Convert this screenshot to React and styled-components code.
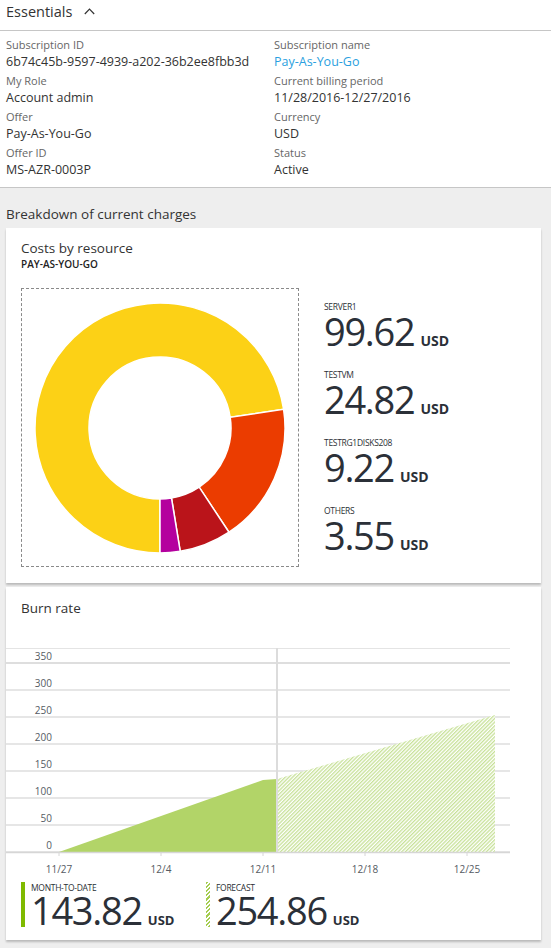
import React from "react";
import styled, { createGlobalStyle } from "styled-components";

const GlobalStyle = createGlobalStyle`
  html, body {
    margin: 0;
    padding: 0;
    background: #eeeeee;
  }
  body {
    font-family: "Open Sans", "Noto Sans", sans-serif;
    color: #32373e;
  }
  * { box-sizing: border-box; }
`;

const Page = styled.div`
  width: 551px;
  min-height: 948px;
  background: #eeeeee;
`;

const Essentials = styled.section`
  background: #ffffff;
  border-bottom: 1px solid #c6c6c6;
`;

const EssHeader = styled.div`
  height: 31px;
  display: flex;
  align-items: center;
  gap: 12px;
  padding-left: 6px;
  padding-bottom: 7px;
  font-size: 14.5px;
  color: #333;
  border-bottom: 1px solid #c6c6c6;
`;

const EssGrid = styled.div`
  display: grid;
  grid-template-columns: 268px 1fr;
  row-gap: 2px;
  padding: 7px 6px 7px 6px;
`;

const Field = styled.div`
  display: flex;
  flex-direction: column;
`;

const FieldLabel = styled.div`
  font-size: 11px;
  line-height: 14px;
  color: #666;
`;

const FieldValue = styled.div`
  font-size: 12.5px;
  line-height: 20px;
  color: ${(p) => (p.$link ? "#2a9fe0" : "#333")};
`;

const Breakdown = styled.section`
  padding: 16px 10px 0 6px;
  display: flex;
  flex-direction: column;
`;

const SectionTitle = styled.div`
  font-size: 13.5px;
  line-height: 20px;
  color: #333;
  margin-bottom: 4px;
`;

const Card = styled.div`
  background: #ffffff;
  box-shadow: 0 2px 2px rgba(0, 0, 0, 0.22);
  margin-bottom: ${(p) => p.$mb || 0}px;
`;

const CardTitle = styled.div`
  font-size: 13.5px;
  line-height: 18px;
  color: #333;
  padding: ${(p) => p.$pad};
`;

const SubTitle = styled.div`
  font-size: 10px;
  font-weight: 600;
  line-height: 14px;
  color: #222;
  padding-left: 15px;
`;

const CostsBody = styled.div`
  display: flex;
  gap: 25px;
  padding: 17px 15px 16px 15px;
`;

const DonutBox = styled.div`
  flex: none;
  width: 278px;
  height: 279px;
  border: 1px dashed #8a8a8a;
  display: flex;
  align-items: center;
  justify-content: center;
`;

const Legend = styled.div`
  display: flex;
  flex-direction: column;
  justify-content: center;
  gap: 20px;
`;

const LegendItem = styled.div`
  display: flex;
  flex-direction: column;
`;

const SmallCaps = styled.div`
  font-size: 8.5px;
  line-height: ${(p) => p.$lh || 10}px;
  letter-spacing: -0.3px;
  text-transform: uppercase;
  color: #2b2f35;
`;

const Amount = styled.div`
  display: flex;
  align-items: baseline;
  gap: 6px;
  height: ${(p) => p.$lh || 38}px;
  line-height: ${(p) => p.$lh || 38}px;
`;

const Big = styled.span`
  font-size: ${(p) => p.$size || 38}px;
  letter-spacing: -1.3px;
  color: #2b3038;
`;

const Unit = styled.span`
  font-size: ${(p) => p.$size || 14}px;
  line-height: 1;
  font-weight: 700;
  color: #2b3038;
`;

const ChartWrap = styled.div`
  margin-top: 23px;
  height: 240px;
`;

const Footer = styled.div`
  display: grid;
  grid-template-columns: 185px auto;
  padding: 2px 15px 13px 15px;
`;

const Metric = styled.div`
  display: flex;
  gap: 6px;
`;

const MetricBar = styled.div`
  width: 4px;
  height: 45px;
  background: ${(p) =>
    p.$hatched
      ? "repeating-linear-gradient(135deg, #a5cd50 0 1.5px, #ffffff 1.5px 3px)"
      : "#7fba00"};
`;

const MetricText = styled.div`
  display: flex;
  flex-direction: column;
`;

const Chevron = () => (
  <svg width="11" height="7" viewBox="0 0 11 7">
    <polyline points="0.8,6 5.5,1.2 10.2,6" fill="none" stroke="#333" strokeWidth="1.2" />
  </svg>
);

const segs = [
  { v: 99.62, c: "#fcd116" },
  { v: 24.82, c: "#eb3c00" },
  { v: 9.22, c: "#ba141a" },
  { v: 3.55, c: "#b4009e" },
];

function pt(cx, cy, r, a) {
  const rad = (a * Math.PI) / 180;
  return [cx + r * Math.sin(rad), cy - r * Math.cos(rad)];
}

const Donut = () => {
  const total = segs.reduce((s, x) => s + x.v, 0);
  const cx = 126, cy = 126, R = 125, r = 71;
  let a = 180;
  return (
    <svg width="252" height="252" viewBox="0 0 252 252">
      {segs.map((s, i) => {
        const sweep = (s.v / total) * 360;
        const a0 = a, a1 = a + sweep;
        a = a1;
        const large = sweep > 180 ? 1 : 0;
        const [x0, y0] = pt(cx, cy, R, a0);
        const [x1, y1] = pt(cx, cy, R, a1);
        const [x2, y2] = pt(cx, cy, r, a1);
        const [x3, y3] = pt(cx, cy, r, a0);
        const d = `M${x0} ${y0} A${R} ${R} 0 ${large} 1 ${x1} ${y1} L${x2} ${y2} A${r} ${r} 0 ${large} 0 ${x3} ${y3} Z`;
        return <path key={i} d={d} fill={s.c} stroke="#fff" strokeWidth="1.5" />;
      })}
    </svg>
  );
};

const yTicks = [350, 300, 250, 200, 150, 100, 50, 0];
const xTicks = [
  { x: 53, l: "11/27" },
  { x: 155, l: "12/4" },
  { x: 257, l: "12/11" },
  { x: 359, l: "12/18" },
  { x: 461, l: "12/25" },
];

const BurnChart = () => (
  <svg width="504" height="240" viewBox="0 0 504 240" style={{ display: "block" }}>
    <defs>
      <pattern id="hatch" width="2.6" height="2.6" patternUnits="userSpaceOnUse" patternTransform="rotate(45)">
        <rect width="2.6" height="2.6" fill="#ffffff" />
        <line x1="0.65" y1="0" x2="0.65" y2="2.6" stroke="#c7e198" strokeWidth="1.3" />
      </pattern>
    </defs>
    <line x1="0" y1="8.5" x2="504" y2="8.5" stroke="#e4e4e4" strokeWidth="1" />
    {yTicks.map((t, i) => {
      const y = 23 + i * 27;
      return (
        <g key={t}>
          <line x1="0" y1={y} x2="504" y2={y} stroke="#dedede" strokeWidth={i === 0 ? 2 : 1.3} />
          <text x="46" y={y - 3.5} textAnchor="end" fontSize="10" fill="#555b63" fontFamily="Open Sans, sans-serif">
            {t}
          </text>
        </g>
      );
    })}
    <polygon points="53,212 257,140 271,139 271,212" fill="#b2d468" />
    <polygon points="271,212 271,139 489,75 489,212" fill="url(#hatch)" />
    <line x1="271" y1="8" x2="271" y2="212" stroke="#dcdcdc" strokeWidth="2" />
    <line x1="0" y1="212.5" x2="504" y2="212.5" stroke="#d6d6d6" strokeWidth="1.5" />
    {xTicks.map((t) => (
      <g key={t.l}>
        <line x1={t.x} y1="212" x2={t.x} y2="216" stroke="#d6d6d6" strokeWidth="1" />
        <text x={t.x} y="233" textAnchor="middle" fontSize="10" fill="#555b63" fontFamily="Open Sans, sans-serif">
          {t.l}
        </text>
      </g>
    ))}
  </svg>
);

const essentials = [
  ["Subscription ID", "6b74c45b-9597-4939-a202-36b2ee8fbb3d"],
  ["Subscription name", "Pay-As-You-Go", true],
  ["My Role", "Account admin"],
  ["Current billing period", "11/28/2016-12/27/2016"],
  ["Offer", "Pay-As-You-Go"],
  ["Currency", "USD"],
  ["Offer ID", "MS-AZR-0003P"],
  ["Status", "Active"],
];

const costs = [
  ["SERVER1", "99.62"],
  ["TESTVM", "24.82"],
  ["TESTRG1DISKS208", "9.22"],
  ["OTHERS", "3.55"],
];

export default function App() {
  return (
    <Page>
      <GlobalStyle />
      <Essentials>
        <EssHeader>
          <span>Essentials</span>
          <Chevron />
        </EssHeader>
        <EssGrid>
          {essentials.map(([l, v, link]) => (
            <Field key={l}>
              <FieldLabel>{l}</FieldLabel>
              <FieldValue $link={link}>{v}</FieldValue>
            </Field>
          ))}
        </EssGrid>
      </Essentials>
      <Breakdown>
        <SectionTitle>Breakdown of current charges</SectionTitle>
        <Card $mb={4}>
          <CardTitle $pad="11px 15px 0 15px">Costs by resource</CardTitle>
          <SubTitle>PAY-AS-YOU-GO</SubTitle>
          <CostsBody>
            <DonutBox>
              <Donut />
            </DonutBox>
            <Legend>
              {costs.map(([n, v]) => (
                <LegendItem key={n}>
                  <SmallCaps>{n}</SmallCaps>
                  <Amount>
                    <Big>{v}</Big>
                    <Unit>USD</Unit>
                  </Amount>
                </LegendItem>
              ))}
            </Legend>
          </CostsBody>
        </Card>
        <Card>
          <CardTitle $pad="12px 15px 0 15px">Burn rate</CardTitle>
          <ChartWrap>
            <BurnChart />
          </ChartWrap>
          <Footer>
            <Metric>
              <MetricBar />
              <MetricText>
                <SmallCaps $lh={11}>MONTH-TO-DATE</SmallCaps>
                <Amount $lh={34}>
                  <Big>143.82</Big>
                  <Unit $size={13}>USD</Unit>
                </Amount>
              </MetricText>
            </Metric>
            <Metric>
              <MetricBar $hatched />
              <MetricText>
                <SmallCaps $lh={11}>FORECAST</SmallCaps>
                <Amount $lh={34}>
                  <Big>254.86</Big>
                  <Unit $size={13}>USD</Unit>
                </Amount>
              </MetricText>
            </Metric>
          </Footer>
        </Card>
      </Breakdown>
    </Page>
  );
}
